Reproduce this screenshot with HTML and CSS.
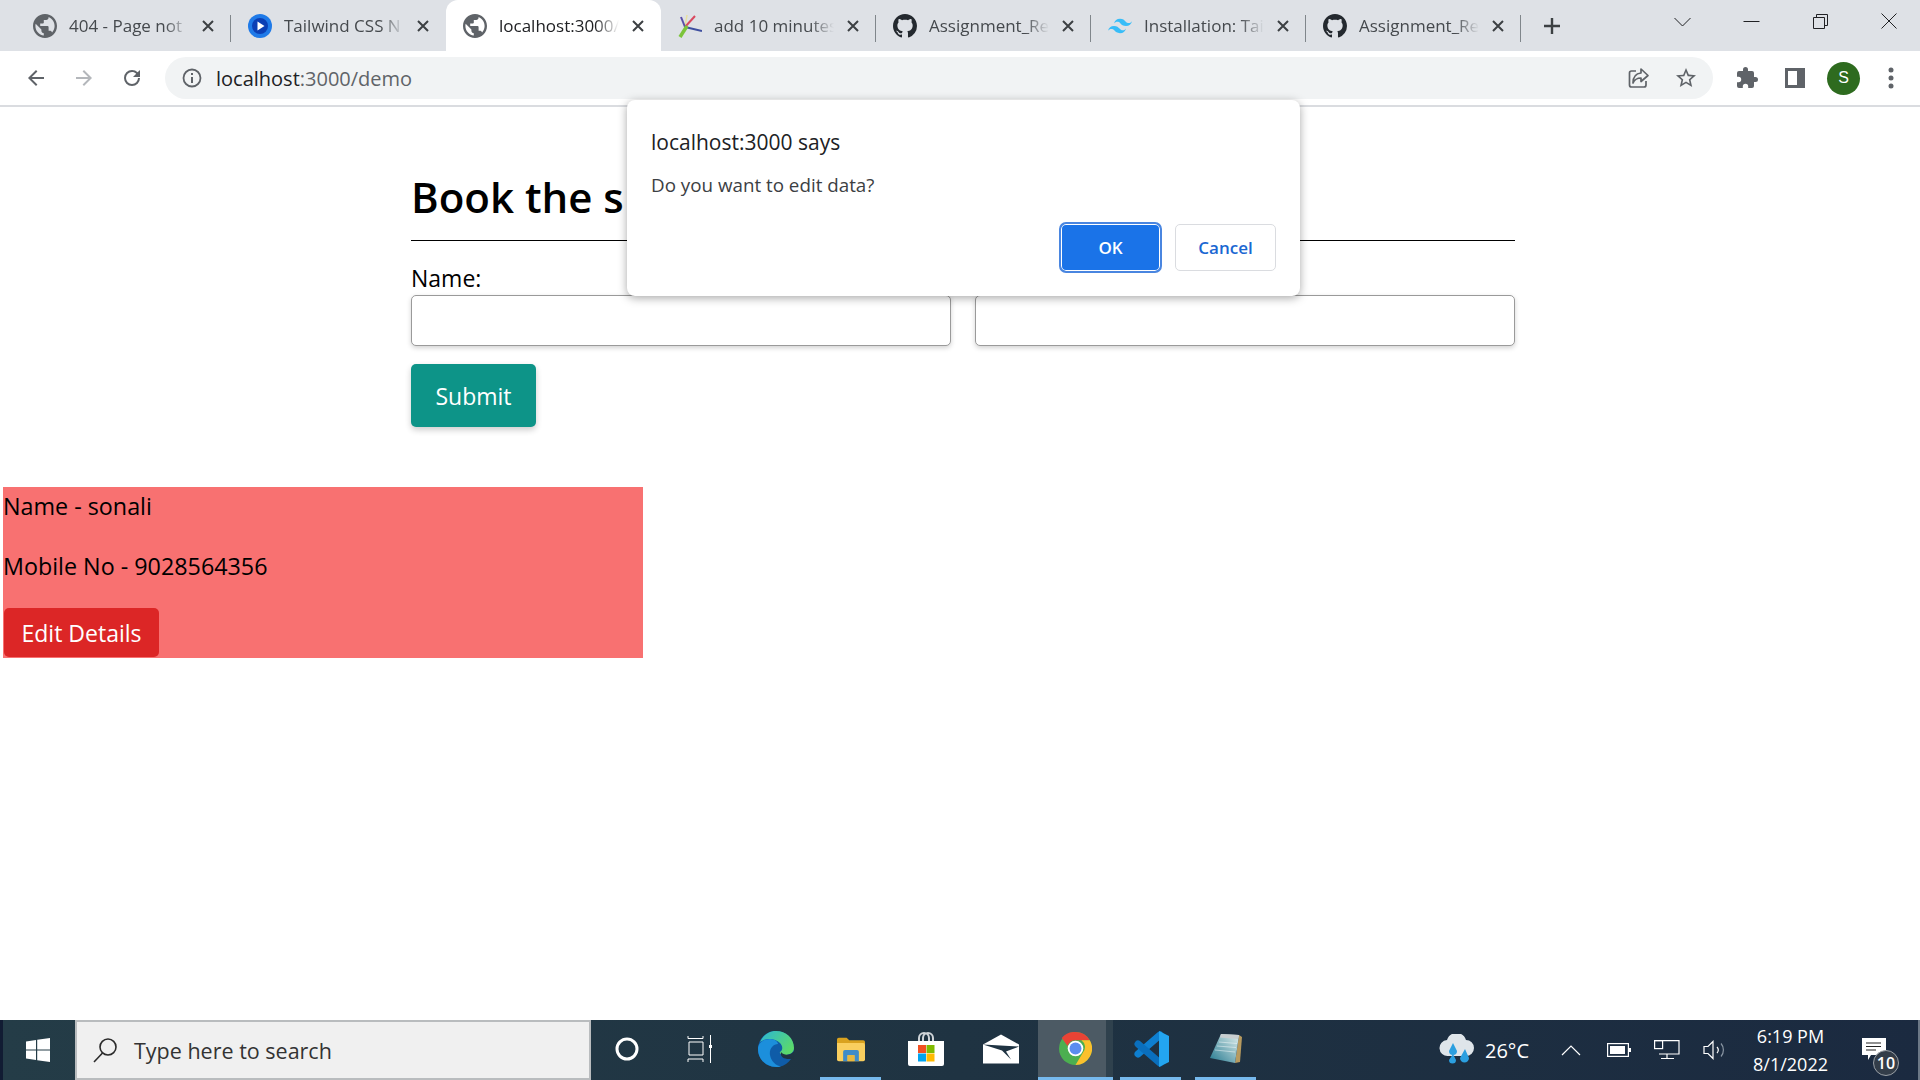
FILE: index.html
```html
<!DOCTYPE html>
<html lang="en">
<head>
    <meta charset="UTF-8">
    <meta name="viewport" content="width=device-width, initial-scale=1.0">
    <title>localhost:3000/demo</title>
    <link rel="stylesheet" href="styles.css">
</head>
<body>
    <svg class="defs" width="0" height="0">
        <symbol id="globe" viewBox="2 2 20 20"><path fill="#5f6368" d="M12 2C6.48 2 2 6.48 2 12s4.48 10 10 10 10-4.48 10-10S17.52 2 12 2zm-1 17.93c-3.95-.49-7-3.85-7-7.93 0-.62.08-1.21.21-1.79L9 15v1c0 1.1.9 2 2 2v1.93zm6.9-2.54c-.26-.81-1-1.39-1.9-1.39h-1v-3c0-.55-.45-1-1-1H8v-2h2c.55 0 1-.45 1-1V7h2c1.1 0 2-.9 2-2v-.41c2.93 1.19 5 4.06 5 7.41 0 2.08-.8 3.97-2.1 5.39z"/></symbol>
        <symbol id="github" viewBox="0 0 16 16"><path fill="#24292f" d="M8 0C3.58 0 0 3.58 0 8c0 3.54 2.29 6.53 5.47 7.59.4.07.55-.17.55-.38 0-.19-.01-.82-.01-1.49-2.01.37-2.53-.49-2.69-.94-.09-.23-.48-.94-.82-1.13-.28-.15-.68-.52-.01-.53.63-.01 1.08.58 1.23.82.72 1.21 1.87.87 2.33.66.07-.52.28-.87.51-1.07-1.78-.2-3.64-.89-3.64-3.95 0-.87.31-1.59.82-2.15-.08-.2-.36-1.02.08-2.12 0 0 .67-.21 2.2.82.64-.18 1.32-.27 2-.27.68 0 1.36.09 2 .27 1.53-1.04 2.2-.82 2.2-.82.44 1.1.16 1.92.08 2.12.51.56.82 1.27.82 2.15 0 3.07-1.87 3.75-3.65 3.95.29.25.54.73.54 1.48 0 1.07-.01 1.93-.01 2.2 0 .21.15.46.55.38A8.013 8.013 0 0016 8c0-4.42-3.58-8-8-8z"/></symbol>
        <symbol id="close" viewBox="0 0 14 14"><path fill="none" stroke="#3c4043" stroke-width="2" d="M2 2l10 10M12 2L2 12"/></symbol>
    </svg>

    <div class="tabstrip">
        <div class="tab">
            <svg class="favicon"><use href="#globe"/></svg>
            <span class="tab-title">404 - Page not</span>
            <svg class="tab-close"><use href="#close"/></svg>
        </div>
        <div class="tab">
            <svg class="favicon" viewBox="0 0 24 24"><circle cx="12" cy="12" r="12" fill="#1f7ae8"/><circle cx="12" cy="12" r="8" fill="#0b3fb5"/><path fill="#fff" d="M9.5 7.5l7 4.5-7 4.500z"/></svg>
            <span class="tab-title">Tailwind CSS N</span>
            <svg class="tab-close"><use href="#close"/></svg>
        </div>
        <div class="tab active">
            <svg class="favicon"><use href="#globe"/></svg>
            <span class="tab-title">localhost:3000/</span>
            <svg class="tab-close"><use href="#close"/></svg>
        </div>
        <div class="tab">
            <svg class="favicon" viewBox="0 0 24 24" fill="none"><path stroke="#e8e0a0" stroke-width="1.500" d="M7 13L9 1"/><path stroke="#d9485f" stroke-width="2" d="M7 13L17 2"/><path stroke="#5a4fa8" stroke-width="2" d="M7 13L3 3"/><path stroke="#3f4f9f" stroke-width="2" d="M7 13L24 17"/><path stroke="#7cc43a" stroke-width="3.500" d="M9 12L2 23"/></svg>
            <span class="tab-title">add 10 minutes</span>
            <svg class="tab-close"><use href="#close"/></svg>
        </div>
        <div class="tab">
            <svg class="favicon"><use href="#github"/></svg>
            <span class="tab-title">Assignment_Re</span>
            <svg class="tab-close"><use href="#close"/></svg>
        </div>
        <div class="tab">
            <svg class="favicon" viewBox="2 5 20 14"><path fill="#38bdf8" d="M12 6c-2.67 0-4.33 1.33-5 4 1-1.33 2.17-1.83 3.5-1.5.76.19 1.31.74 1.91 1.35.98 1 2.09 2.15 4.59 2.15 2.67 0 4.33-1.33 5-4-1 1.33-2.17 1.83-3.5 1.5-.76-.19-1.31-.74-1.91-1.35C15.61 7.15 14.5 6 12 6zm-5 6c-2.67 0-4.33 1.33-5 4 1-1.33 2.17-1.83 3.5-1.5.76.19 1.31.74 1.91 1.35C8.39 16.85 9.5 18 12 18c2.67 0 4.33-1.33 5-4-1 1.33-2.17 1.83-3.5 1.5-.76-.19-1.31-.74-1.91-1.35C10.61 13.15 9.5 12 7 12z"/></svg>
            <span class="tab-title">Installation: Tai</span>
            <svg class="tab-close"><use href="#close"/></svg>
        </div>
        <div class="tab">
            <svg class="favicon"><use href="#github"/></svg>
            <span class="tab-title">Assignment_Re</span>
            <svg class="tab-close"><use href="#close"/></svg>
        </div>
        <svg class="new-tab" viewBox="0 0 18 18"><path fill="none" stroke="#3c4043" stroke-width="2.4" d="M9 1v16M1 9h16"/></svg>
        <div class="window-controls">
            <svg class="win-btn" viewBox="0 0 56 20" fill="none" stroke="#202124"><path d="M20 7l8 8 8-8"/></svg>
            <svg class="win-btn" viewBox="0 0 56 20" fill="none" stroke="#202124"><path d="M20 10.5h16"/></svg>
            <svg class="win-btn" viewBox="0 0 56 20" fill="none" stroke="#202124"><path d="M21 6.5h11v11H21zM24 6.5v-3h11v11h-3"/></svg>
            <svg class="win-btn" viewBox="0 0 56 20" fill="none" stroke="#202124"><path d="M20 2.5l15 15M35 2.5l-15 15"/></svg>
        </div>
    </div>

    <div class="toolbar">
        <svg class="tool-icon" viewBox="0 0 24 24"><path fill="#5f6368" d="M20 11H7.83l5.59-5.59L12 4l-8 8 8 8 1.41-1.41L7.83 13H20v-2z"/></svg>
        <svg class="tool-icon" viewBox="0 0 24 24"><path fill="#b4b7bb" d="M4 11h12.17l-5.59-5.59L12 4l8 8-8 8-1.41-1.41L16.17 13H4v-2z"/></svg>
        <svg class="tool-icon" viewBox="0 0 24 24"><path fill="#5f6368" d="M17.65 6.35A7.96 7.96 0 0012 4a8 8 0 108 8h-2a6 6 0 11-6-6c1.66 0 3.14.69 4.22 1.78L13 11h7V4l-2.35 2.35z"/></svg>
        <div class="omnibox">
            <svg class="info-icon" viewBox="0 0 20 20" fill="none"><circle cx="10" cy="10" r="8.5" stroke="#5f6368" stroke-width="1.8"/><path stroke="#5f6368" stroke-width="2" d="M10 9v6M10 5v2"/></svg>
            <span class="url"><span class="url-host">localhost</span>:3000/demo</span>
            <svg class="omni-icon share" viewBox="0 0 24 24" fill="none" stroke="#5f6368" stroke-width="1.7"><path d="M10 5H5.5A2 2 0 003.5 7v12a2 2 0 002 2H18a2 2 0 002-2v-4"/><path stroke-linejoin="round" d="M15 3l7 6.5-7 6V12c-4 0-6.500 1.500-8 5 0-6 3-9.500 8-10z"/></svg>
            <svg class="omni-icon star" viewBox="0 0 24 24"><path fill="#5f6368" d="M22 9.240l-7.190-.62L12 2 9.190 8.630 2 9.240l5.460 4.730L5.820 21 12 17.270 18.180 21l-1.630-7.030L22 9.240zM12 15.400l-3.760 2.270 1-4.280-3.320-2.880 4.380-.38L12 6.100l1.710 4.040 4.380.38-3.320 2.880 1 4.280L12 15.400z"/></svg>
        </div>
        <div class="toolbar-right">
            <svg class="tool-icon" viewBox="0 0 24 24"><path fill="#5f6368" d="M20.500 11H19V7a2 2 0 00-2-2h-4V3.500a2.500 2.500 0 00-5 0V5H4a2 2 0 00-2 2v3.800h1.500a2.700 2.700 0 010 5.400H2V20a2 2 0 002 2h3.800v-1.500a2.700 2.700 0 015.400 0V22H17a2 2 0 002-2v-4h1.500a2.500 2.500 0 000-5z"/></svg>
            <svg class="tool-icon" viewBox="0 0 24 24"><path fill="#5f6368" fill-rule="evenodd" d="M2 2h20v20H2zM5 5v14h9V5z"/></svg>
            <span class="avatar">S</span>
            <svg class="tool-icon" viewBox="0 0 24 24"><circle cx="12" cy="4" r="2.500" fill="#5f6368"/><circle cx="12" cy="12" r="2.500" fill="#5f6368"/><circle cx="12" cy="20" r="2.500" fill="#5f6368"/></svg>
        </div>
    </div>

    <div class="page">
        <div class="booking">
            <h1 class="booking-title">Book the s</h1>
            <form class="booking-form">
                <div class="field">
                    <label>Name:</label>
                    <input type="text">
                </div>
                <div class="field">
                    <label></label>
                    <input type="text">
                </div>
            </form>
            <button class="btn-submit">Submit</button>
        </div>
        <div class="record">
            <p class="record-line">Name - sonali</p>
            <p class="record-line">Mobile No - 9028564356</p>
            <button class="btn-edit">Edit Details</button>
        </div>
    </div>

    <div class="dialog">
        <div class="dialog-title">localhost:3000 says</div>
        <div class="dialog-msg">Do you want to edit data?</div>
        <div class="dialog-actions">
            <button class="btn-ok">OK</button>
            <button class="btn-cancel">Cancel</button>
        </div>
    </div>

    <div class="taskbar">
        <div class="start">
            <svg class="start-logo" viewBox="0 0 24 24"><path fill="#fff" d="M0 3.400l10-1.400v9.400H0zM11.200 1.800L24 0v11.400H11.200zM0 12.600h10V22L0 20.600zM11.200 12.600H24V24l-12.800-1.800z"/></svg>
        </div>
        <div class="search">
            <svg class="search-icon" viewBox="0 0 26 26" fill="none" stroke="#2b2b2b" stroke-width="1.6"><circle cx="16" cy="10" r="8"/><path d="M10.500 16L2 25"/></svg>
            <span class="search-text">Type here to search</span>
        </div>
        <div class="task-cell narrow">
            <svg class="task-icon" viewBox="0 0 28 28" fill="none"><circle cx="14" cy="14" r="10" stroke="#fff" stroke-width="3"/></svg>
        </div>
        <div class="task-cell">
            <svg class="task-icon" viewBox="0 0 28 28" fill="none" stroke="#fff"><path d="M1 1v2.500h15V1M2 7h14v13H2zM1 27v-3h15v3M23.500 0v28"/><rect x="22" y="10" width="3" height="3" fill="#fff" stroke="none"/></svg>
        </div>
        <div class="task-cell">
            <svg class="task-icon big" viewBox="0 0 36 36"><defs><linearGradient id="edge-top" x1="0" y1="0" x2="1" y2=".6"><stop offset="0" stop-color="#2bb5d8"/><stop offset="1" stop-color="#5bd96b"/></linearGradient></defs><circle cx="18" cy="18" r="18" fill="#0f5ca8"/><path fill="url(#edge-top)" d="M2 11C5 4 11 0 18 0c10 0 18 7 18 17 0 5-5 7-9 7-3 0-6-1-5-3 3-2 3-6 0-9-5-5-15-5-20-1z"/><path fill="#1c8fdc" d="M0 18C0 12 5 8 12 8c5 0 8 3 8 5-5 0-9 5-8 11 1 6 6 11 11 11.400-2 .6-3 .6-5 .6C8 36 0 28 0 18z"/><path fill="#1f3342" d="M37 19c-4 6-11 6-14 2-1 4 2 7 8 7h6z"/></svg>
        </div>
        <div class="task-cell running">
            <svg class="task-icon" viewBox="0 0 32 28"><path fill="#d9a21f" d="M0 3a2 2 0 012-2h9l3 3h16a2 2 0 012 2v3H0z"/><path fill="#f9cf5f" d="M0 7h30a2 2 0 012 2v17a2 2 0 01-2 2H2a2 2 0 01-2-2z"/><path fill="#3f8cc9" d="M7 28V17a2 2 0 012-2h14a2 2 0 012 2v11h-5v-7h-8v7z"/><rect x="12" y="21" width="8" height="7" fill="#e8b83f"/></svg>
        </div>
        <div class="task-cell">
            <svg class="task-icon big" viewBox="0 0 36 34"><path fill="none" stroke="#cfd4d8" stroke-width="2" d="M11 9V6a5 5 0 0110 0v3M15 9V6a5 5 0 0110 0v3"/><path fill="#fff" d="M0 9h36v23a2 2 0 01-2 2H2a2 2 0 01-2-2z"/><rect x="10" y="13" width="8" height="8" fill="#f25022"/><rect x="18.500" y="13" width="8" height="8" fill="#7fba00"/><rect x="10" y="21.500" width="8" height="8" fill="#00a4ef"/><rect x="18.500" y="21.500" width="8" height="8" fill="#ffb900"/></svg>
        </div>
        <div class="task-cell">
            <svg class="task-icon big" viewBox="0 0 36 29"><path fill="#fff" d="M0 10L18 0l18 10v19H0z"/><path fill="#1f3342" d="M0 10l36 2-13 5 5 8-9-9z"/></svg>
        </div>
        <div class="task-cell running active">
            <svg class="task-icon chrome" viewBox="0 0 36 36"><circle cx="18" cy="18" r="18" fill="#4caf50"/><path fill="#ea4335" d="M18 0a18 18 0 0115.600 9H18a9 9 0 00-8.600 6.300L3 6.500A18 18 0 0118 0z"/><path fill="#fbc02d" d="M33.600 9A18 18 0 0118 36l8-13.500A9 9 0 0024.400 9z"/><circle cx="18" cy="18" r="8.500" fill="#fff"/><circle cx="18" cy="18" r="6.500" fill="#5b8def"/></svg>
        </div>
        <div class="task-cell running">
            <svg class="task-icon big" viewBox="0 0 36 36" fill="none"><path stroke="#0e7fd0" stroke-width="7" stroke-linecap="round" d="M27 4L5 23"/><path stroke="#0a6fbd" stroke-width="7" stroke-linecap="round" d="M27 32L5 13"/><path fill="#23a5f0" d="M26 0l10 5v26l-10 5z"/></svg>
        </div>
        <div class="task-cell running">
            <svg class="task-icon big" viewBox="0 0 36 36"><defs><linearGradient id="pad" x1="1" y1="0" x2="0" y2="1"><stop offset="0" stop-color="#e2f0ee"/><stop offset="1" stop-color="#23788f"/></linearGradient></defs><path fill="#b79a5f" d="M31 4l3 2-2 25-5 1z"/><path fill="url(#pad)" d="M13 3l18 1-4 28L2 27z"/><path fill="#c9ced0" d="M13 3l18 1-1 4-18-1.500z"/><path stroke="#fff" stroke-opacity=".45" d="M11 11l18 1.500M9 15l19 1.500M7 19l20 2"/></svg>
        </div>
        <div class="tray">
            <div class="weather">
                <svg class="weather-icon" viewBox="0 0 36 32"><path fill="#dfe5ea" d="M9 22a8 8 0 01-1-16A10 10 0 0127 6a8 8 0 010 16z"/><path fill="#2b9fe0" d="M14 9l4 8a4 4 0 11-8 0zM26 15l4 9a4.500 4.500 0 11-9 0zM14 20l3 6a3.500 3.500 0 11-7 0z"/></svg>
                <span>26°C</span>
            </div>
            <div class="tray-cell"><svg viewBox="0 0 20 12" width="20" height="12" fill="none" stroke="#fff" stroke-width="1.200"><path d="M1 11l9-9 9 9"/></svg></div>
            <div class="tray-cell"><svg viewBox="0 0 24 14" width="24" height="14" fill="none" stroke="#fff" stroke-width="1.200"><rect x=".6" y=".6" width="20.800" height="12.800"/><rect x="3" y="3" width="15" height="8" fill="#fff" stroke="none"/><rect x="22" y="5" width="2" height="4" fill="#fff" stroke="none"/></svg></div>
            <div class="tray-cell"><svg viewBox="0 0 26 20" width="26" height="20" fill="none" stroke="#fff" stroke-width="1.200"><path d="M1 .6h24v13.400H5M13 14v4M7 18.500h13"/><rect x=".6" y=".6" width="8" height="8"/></svg></div>
            <div class="tray-cell"><svg viewBox="0 0 24 20" width="24" height="20" fill="none" stroke="#fff" stroke-width="1.200"><path d="M1 6.500h4L10 1.500v17L5 13.500H1z"/><path d="M14 7c1.500 1.700 1.500 4.300 0 6"/><path stroke="#8a96a3" d="M18 3.500c3.200 3.500 3.200 9.500 0 13"/></svg></div>
            <div class="clock">
                <span>6:19 PM</span>
                <span>8/1/2022</span>
            </div>
            <div class="notif">
                <svg viewBox="0 0 24 22" width="24" height="22"><path fill="#fff" d="M0 0h24v17H9l-3 5v-5H0z"/><path stroke="#222" stroke-width="1.200" d="M4 5h15M4 8.500h15M4 12h10"/></svg>
                <span class="notif-badge">10</span>
            </div>
            <div class="show-desktop"></div>
        </div>
    </div>
</body>
</html>
```

FILE: styles.css
```css
* {
    box-sizing: border-box;
}
html, body {
    margin: 0;
    height: 100%;
}
body {
    display: flex;
    flex-direction: column;
    height: 1080px;
    overflow: hidden;
    font-family: "Open Sans", sans-serif;
    color: #000;
    background: #fff;
}
.defs {
    position: absolute;
}

/* tab strip */
.tabstrip {
    display: flex;
    align-items: center;
    height: 51px;
    padding-left: 16px;
    background: #dee1e6;
    flex-shrink: 0;
}
.tab {
    display: flex;
    align-items: center;
    width: 215px;
    height: 51px;
    padding-left: 17px;
    position: relative;
}
.tab::after {
    content: "";
    position: absolute;
    right: 0;
    top: 15px;
    height: 27px;
    width: 1px;
    background: #80868b;
}
.tab.active {
    background: #fff;
    border-radius: 12px 12px 0 0;
}
.tab.active::after, .tab:nth-child(2)::after {
    display: none;
}
.favicon {
    width: 24px;
    height: 24px;
    flex-shrink: 0;
}
.tab-title {
    width: 120px;
    margin-left: 12px;
    font-size: 17px;
    color: #45494d;
    white-space: nowrap;
    -webkit-mask-image: linear-gradient(to right, #000 80%, transparent);
    mask-image: linear-gradient(to right, #000 80%, transparent);
}
.tab.active .tab-title {
    color: #202124;
}
.tab-close {
    width: 14px;
    height: 14px;
    margin-left: 12px;
    flex-shrink: 0;
}
.new-tab {
    width: 18px;
    height: 18px;
    margin-left: 22px;
}
.window-controls {
    display: flex;
    margin-left: auto;
    margin-right: -4px;
    margin-top: -9px;
}
.win-btn {
    width: 69px;
    height: 20px;
}

/* toolbar */
.toolbar {
    display: flex;
    align-items: center;
    height: 56px;
    padding-left: 24px;
    background: #fff;
    border-bottom: 2px solid #dadce0;
    flex-shrink: 0;
}
.tool-icon {
    width: 24px;
    height: 24px;
    margin-right: 24px;
    flex-shrink: 0;
}
.omnibox {
    display: flex;
    align-items: center;
    width: 1548px;
    height: 42px;
    margin-left: -3px;
    padding: 0 15px 0 17px;
    background: #f1f3f4;
    border-radius: 21px;
}
.info-icon {
    width: 20px;
    height: 20px;
}
.url {
    margin-left: 14px;
    font-size: 20px;
    color: #5f6368;
}
.url-host {
    color: #202124;
}
.omni-icon {
    width: 24px;
    height: 24px;
}
.share {
    margin-left: auto;
}
.star {
    margin-left: 24px;
}
.toolbar-right {
    display: flex;
    align-items: center;
    margin-left: 22px;
}
.toolbar-right .tool-icon {
    margin-right: 24px;
}
.toolbar-right .tool-icon:nth-child(2) {
    margin-right: 20px;
}
.toolbar-right .tool-icon:last-child {
    margin-right: 0;
}
.avatar {
    display: flex;
    align-items: center;
    justify-content: center;
    width: 33px;
    height: 33px;
    margin-right: 19px;
    border-radius: 50%;
    background: #2e6b1f;
    color: #fff;
    font-size: 16px;
    font-family: "Liberation Sans", sans-serif;
}

/* page content */
.page {
    flex: 1;
    position: relative;
}
.booking {
    width: 1104px;
    margin-left: 411px;
    padding-top: 59px;
}
.booking-title {
    margin: 0;
    height: 75px;
    font-size: 42px;
    font-weight: 600;
    line-height: 61px;
    border-bottom: 1px solid #000;
}
.booking-form {
    display: flex;
    gap: 24px;
    margin-top: 20px;
}
.field {
    flex: 1;
}
.field label {
    display: block;
    height: 34px;
    font-size: 23px;
    line-height: 34px;
}
.field input {
    display: block;
    width: 100%;
    height: 51px;
    border: 1px solid #9a9a9a;
    border-radius: 5px;
    box-shadow: 0 2px 5px rgba(0, 0, 0, .18);
    background: #fff;
}
.btn-submit {
    display: block;
    width: 125px;
    height: 63px;
    margin-top: 18px;
    border: 0;
    border-radius: 5px;
    background: #0d9488;
    color: #fff;
    font-family: inherit;
    font-size: 23px;
    box-shadow: 0 3px 6px rgba(0, 0, 0, .2);
}
.record {
    width: 640px;
    height: 171px;
    margin: 60px 0 0 3px;
    padding-top: 2px;
    background: #f87171;
}
.record-line {
    margin: 0 0 27px;
    padding-top: 2px;
    font-size: 23.3px;
    line-height: 31px;
}
.btn-edit {
    display: block;
    width: 155px;
    height: 49px;
    margin: -1px 0 0 1px;
    border: 0;
    border-radius: 5px;
    background: #dc2626;
    color: #fff;
    font-family: inherit;
    font-size: 23px;
}

/* js confirm box */
.dialog {
    position: absolute;
    left: 627px;
    top: 100px;
    width: 673px;
    height: 196px;
    padding: 24px 24px 0;
    background: #fff;
    border-radius: 8px;
    box-shadow: 0 2px 10px rgba(0, 0, 0, .35);
}
.dialog-title {
    font-size: 21px;
    line-height: 36px;
    color: #202124;
}
.dialog-msg {
    margin-top: 11px;
    font-size: 18.8px;
    line-height: 28px;
    color: #3c4043;
}
.dialog-actions {
    display: flex;
    justify-content: flex-end;
    align-items: center;
    gap: 13px;
    margin-top: 23px;
}
.btn-ok {
    width: 103px;
    height: 51px;
    border: 2px solid #4a86e0;
    border-radius: 7px;
    background: #1a73e8;
    box-shadow: inset 0 0 0 1px #fff;
    color: #fff;
    font-family: inherit;
    font-size: 17px;
    font-weight: 600;
}
.btn-cancel {
    width: 101px;
    height: 47px;
    border: 1px solid #dadce0;
    border-radius: 5px;
    background: #fff;
    color: #1a67d2;
    font-family: inherit;
    font-size: 17px;
    font-weight: 600;
}

/* windows taskbar */
.taskbar {
    display: flex;
    height: 60px;
    flex-shrink: 0;
    background: linear-gradient(to right, #243c47, #1f3342 50%, #1b2a40);
    color: #fff;
}
.start {
    display: flex;
    align-items: center;
    justify-content: center;
    width: 75px;
    padding-right: 2px;
    border-left: 3px solid #111c33;
}
.start-logo {
    width: 24px;
    height: 24px;
}
.search {
    display: flex;
    align-items: center;
    width: 516px;
    padding-left: 15px;
    background: #f0f0f0;
    border: 2px solid #b9bcbe;
}
.search-icon {
    width: 26px;
    height: 26px;
}
.search-text {
    margin-left: 16px;
    font-size: 21.5px;
    color: #333;
}
.task-cell {
    display: flex;
    align-items: center;
    justify-content: center;
    width: 75px;
    padding-bottom: 3px;
    position: relative;
}
.task-cell.narrow {
    width: 72px;
}
.task-cell.running::after {
    content: "";
    position: absolute;
    left: 7px;
    right: 7px;
    bottom: 0;
    height: 3px;
    background: #76b9ed;
}
.task-cell.active {
    background: linear-gradient(to right, #4c5a64 91%, #2f414d 91%);
}
.task-cell.active::after {
    left: 0;
    right: 0;
}
.task-icon {
    width: 28px;
    height: 28px;
}
.task-icon.big {
    width: 36px;
    height: 36px;
}
.task-icon.chrome {
    width: 33px;
    height: 33px;
}
.tray {
    display: flex;
    align-items: center;
    margin-left: auto;
    height: 100%;
}
.weather {
    display: flex;
    align-items: center;
    gap: 10px;
    width: 108px;
    font-size: 20px;
}
.weather-icon {
    width: 36px;
    height: 32px;
}
.tray-cell {
    display: flex;
    align-items: center;
    justify-content: center;
    width: 48px;
}
.clock {
    display: flex;
    flex-direction: column;
    align-items: center;
    width: 103px;
    font-size: 18px;
    line-height: 28px;
}
.notif {
    width: 63px;
    height: 100%;
    position: relative;
    padding: 18px 0 0 20px;
}
.notif-badge {
    position: absolute;
    left: 31px;
    top: 30px;
    width: 26px;
    height: 26px;
    border-radius: 50%;
    background: #333d49;
    border: 1px solid #9aa0a6;
    font-size: 16px;
    font-weight: 600;
    line-height: 24px;
    text-align: center;
}
.show-desktop {
    width: 15px;
    height: 100%;
    border-right: 2px solid #6c7886;
}
```
